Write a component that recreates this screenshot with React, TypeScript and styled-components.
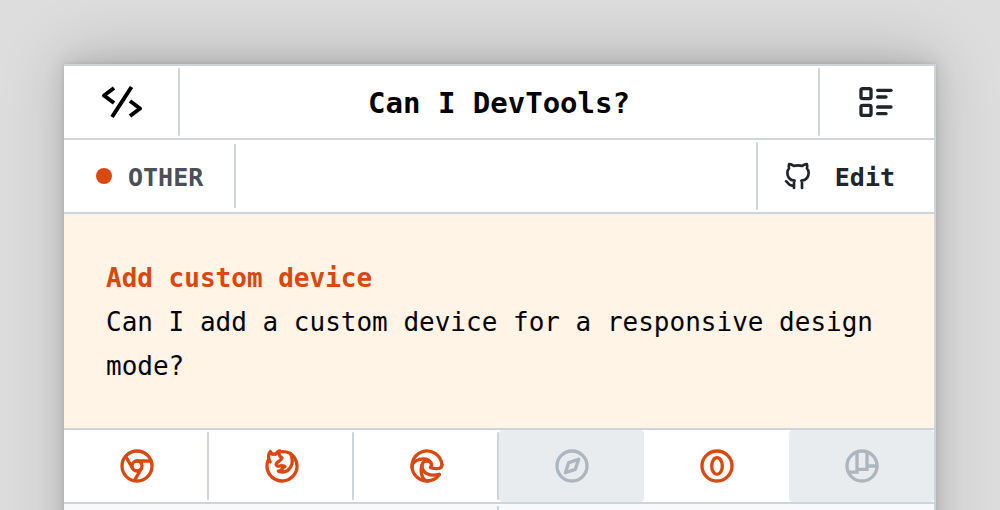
import React from "react";
import styled, { createGlobalStyle } from "styled-components";
import {
  TbBrandChrome,
  TbBrandEdge,
  TbBrandFirefox,
  TbBrandGithub,
  TbBrandSafari,
  TbListDetails,
} from "react-icons/tb";

const line = "#ced4da";
const accent = "#d9480f";
const muted = "#adb5bd";

const GlobalStyle = createGlobalStyle`
  *, *::before, *::after { box-sizing: border-box; }
  body {
    margin: 0;
    background: #dddddd;
    color: #000;
    font-family: "DejaVu Sans Mono", monospace;
  }
  h1, h2, p, ul { margin: 0; padding: 0; }
`;

const Page = styled.div`
  display: flex;
  flex-direction: column;
  height: 100vh;
  padding: 64px 64px 0;
  overflow: hidden;
`;

const Card = styled.main`
  flex: 1 0 auto;
  display: flex;
  flex-direction: column;
  background: #fff;
  border-top: 2px solid ${line};
  border-right: 2px solid ${line};
  box-shadow: 0 0 4px rgba(0, 0, 0, 0.12), 0 -2px 20px rgba(0, 0, 0, 0.1),
    0 -10px 60px rgba(0, 0, 0, 0.18);
`;

const Bar = styled.header`
  display: flex;
  align-items: center;
  height: 74px;
  border-bottom: 2px solid ${line};
`;

const Divider = styled.span<{ $short?: boolean }>`
  width: 2px;
  height: ${(p) => (p.$short ? 64 : 68)}px;
  border-radius: ${(p) => (p.$short ? 0 : 1)}px;
  background: ${line};
`;

const IconLink = styled.a`
  display: flex;
  align-items: center;
  justify-content: center;
  width: 114px;
  padding-right: 2px;
  color: #212529;
`;

const Title = styled.h1`
  flex: 1;
  padding-top: 2px;
  font-size: 29px;
  line-height: 44px;
  text-align: center;
`;

const Category = styled.div`
  display: flex;
  align-items: center;
  gap: 16px;
  padding: 0 31px 0 32px;
  color: #495057;
  font-size: 25px;
  font-weight: 700;
`;

const Label = styled.span`
  padding-top: 2px;
`;

const Dot = styled.span`
  width: 16px;
  height: 16px;
  border-radius: 50%;
  background: ${accent};
`;

const EditLink = styled.a`
  display: flex;
  align-items: center;
  gap: 21px;
  padding: 0 39px 0 24px;
  color: #212529;
  font-size: 25px;
  font-weight: 700;
  text-decoration: none;
`;

const Spacer = styled.div`
  flex: 1;
`;

const Intro = styled.section`
  padding: 42px 42px 40px;
  background: #fff4e6;
  border-bottom: 2px solid ${line};
  font-size: 26px;
  line-height: 44px;
`;

const Heading = styled.h2`
  color: ${accent};
  font-size: inherit;
`;

const Browsers = styled.ul`
  display: grid;
  grid-template-columns: repeat(6, 1fr);
  height: 74px;
  border-bottom: 2px solid ${line};
  list-style: none;
`;

const Browser = styled.li<{ $off?: boolean; $divided?: boolean }>`
  position: relative;
  display: flex;
  align-items: center;
  justify-content: center;
  border-radius: 4px;
  color: ${(p) => (p.$off ? muted : accent)};
  background: ${(p) => (p.$off ? "#e9ecef" : "#fff")};

  &::after {
    content: "";
    display: ${(p) => (p.$divided ? "block" : "none")};
    position: absolute;
    top: 2px;
    right: 0;
    width: 2px;
    height: 68px;
    border-radius: 1px;
    background: ${line};
  }
`;

const Notes = styled.section`
  flex: 1;
  display: flex;
  justify-content: center;
  min-height: 100px;
  padding-top: 2px;
  background: #f8f9fa;
`;

const NotesDivider = styled.span`
  width: 2px;
  margin-right: 2px;
  border-radius: 1px;
  background: ${line};
`;

const stroke = {
  fill: "none",
  stroke: "currentColor",
  strokeWidth: 2,
  strokeLinecap: "round" as const,
  strokeLinejoin: "round" as const,
};

const CodeMark = () => (
  <svg width="46" height="34" viewBox="-4 0 46 34" fill="none" stroke="#000" strokeWidth="4" strokeLinejoin="round">
    <path d="M13 3 3 10.500 13 18M30.500 2 11 32M29 16l10 7.500L29 31" />
  </svg>
);

const OperaIcon = () => (
  <svg width="40" height="40" viewBox="0 0 24 24" {...stroke}>
    <circle cx="12" cy="12" r="9" />
    <ellipse cx="12" cy="12" rx="3.200" ry="5" />
  </svg>
);

const PolypaneIcon = () => (
  <svg width="40" height="40" viewBox="0 0 24 24" {...stroke} strokeLinejoin="miter">
    <circle cx="12" cy="12" r="9" />
    <path d="M4 15.700h5V4M9 14h6V4M15 12h6" />
  </svg>
);

const browsers = [
  { name: "Chrome", icon: <TbBrandChrome size={40} />, divided: true },
  { name: "Firefox", icon: <TbBrandFirefox size={40} />, divided: true },
  { name: "Edge", icon: <TbBrandEdge size={40} />, divided: true },
  { name: "Safari", icon: <TbBrandSafari size={40} />, off: true },
  { name: "Opera", icon: <OperaIcon /> },
  { name: "Polypane", icon: <PolypaneIcon />, off: true },
];

export default function App() {
  return (
    <>
      <GlobalStyle />
      <Page>
        <Card>
          <Bar>
            <IconLink href="#home" aria-label="Home">
              <CodeMark />
            </IconLink>
            <Divider />
            <Title>Can I DevTools?</Title>
            <Divider />
            <IconLink href="#list" aria-label="All features">
              <TbListDetails size={40} />
            </IconLink>
          </Bar>
          <Bar as="div">
            <Category>
              <Dot />
              <Label>OTHER</Label>
            </Category>
            <Divider $short />
            <Spacer />
            <Divider />
            <EditLink href="#edit">
              <TbBrandGithub size={32} />
              <Label>Edit</Label>
            </EditLink>
          </Bar>
          <Intro>
            <Heading>Add custom device</Heading>
            <p>Can I add a custom device for a responsive design mode?</p>
          </Intro>
          <Browsers>
            {browsers.map((b) => (
              <Browser key={b.name} $off={b.off} $divided={b.divided} aria-label={b.name}>
                {b.icon}
              </Browser>
            ))}
          </Browsers>
          <Notes>
            <NotesDivider />
          </Notes>
        </Card>
      </Page>
    </>
  );
}
